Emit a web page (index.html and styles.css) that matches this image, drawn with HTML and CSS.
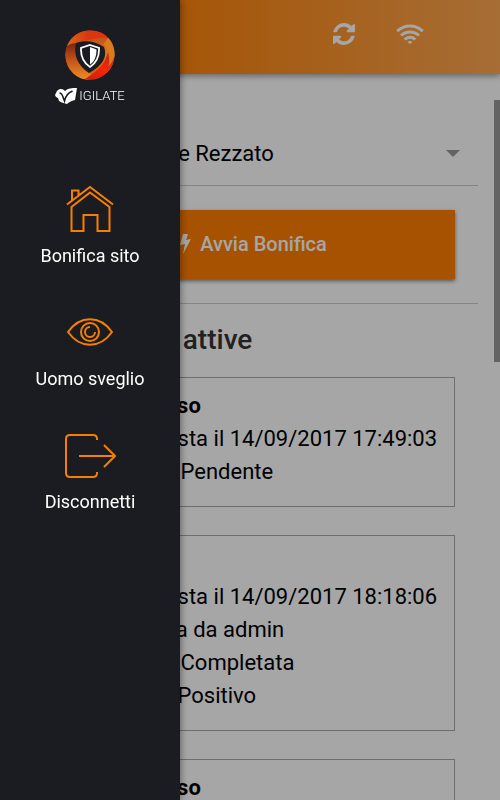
FILE: index.html
```
<!DOCTYPE html>
<html lang="it">
<head>
  <meta charset="UTF-8">
  <meta name="viewport" content="width=device-width, initial-scale=1.0">
  <title>Vigilate</title>
  <link rel="stylesheet" href="styles.css">
</head>
<body>

  <!-- Side menu -->
  <nav class="drawer">
    <div class="logo">
      <svg class="logo-mark" viewBox="0 0 50 50" aria-hidden="true">
        <defs>
          <linearGradient id="top" x1="0" y1="0" x2="1" y2="0">
            <stop offset="0" stop-color="#d8681c"/>
            <stop offset="0.5" stop-color="#d8380f"/>
            <stop offset="1" stop-color="#e8300c"/>
          </linearGradient>
          <linearGradient id="right" x1="0" y1="0" x2="0" y2="1">
            <stop offset="0" stop-color="#b8401a"/>
            <stop offset="0.5" stop-color="#dc7a1e"/>
            <stop offset="1" stop-color="#c8581c"/>
          </linearGradient>
          <linearGradient id="bottom" x1="0" y1="1" x2="1" y2="0">
            <stop offset="0" stop-color="#c81e0a"/>
            <stop offset="0.5" stop-color="#f82408"/>
            <stop offset="1" stop-color="#a83014"/>
          </linearGradient>
          <linearGradient id="left" x1="0" y1="0" x2="0" y2="1">
            <stop offset="0" stop-color="#7a2410"/>
            <stop offset="0.5" stop-color="#c8561a"/>
            <stop offset="1" stop-color="#ee8c22"/>
          </linearGradient>
        </defs>
        <circle cx="25" cy="25" r="24.5" fill="url(#right)"/>
        <path d="M2 16C6 6 15 .5 25 .5c9 0 14 3 18 7-8 0-16 1-22 3-7 1-14 3-19 5.500z" fill="url(#top)"/>
        <path d="M2 16c3-2 6-3 10-3-3 12 2 24 14 31 0 2-1 4-3 5.500C11 49.500.5 38.500.5 25c0-3 .5-6 1.500-9z" fill="url(#left)"/>
        <path d="M20 49c11-7 20-14 23-27 3-2 5 0 6.500 3-.5 13-11 24.500-24.500 24.500-2 0-3.500-.2-5-.5z" fill="url(#bottom)"/>
        <path d="M43 7.500c5 5 7 12 6.500 18-1 4-3 8-6 11 2-8 0-17-5-22z" fill="#dc7a1e"/>
        <path d="M11 13c9-3 19-2 28 4 4 10-2 19-15 26C13 36 8 25 11 13z" fill="#1b1c21"/>
        <path d="M25 15l9 3v2c0 8-3 13-9 17-6-4-9-9-9-17v-2z" fill="#1b1c21" stroke="#fff" stroke-width="1.800"/>
        <path d="M25 17l6.500 2.500c0 7-2 12-6.500 15z" fill="#fff"/>
      </svg>
      <div class="logo-name">
        <svg viewBox="0 0 22 16" aria-hidden="true">
          <path d="M0 7l2-4c3-3 6-2 8 0 3-3 7-3 12-3l-2 12c-4 1-6 2-8 4-2-1-5-1-8-3l-1-3-2-1z" fill="#fff"/>
          <path d="M4.500 5c3 0 3 3 5 8 1-5 3-8 8-10" fill="none" stroke="#1b1c21" stroke-width="1.600"/>
        </svg>
        <span>IGILATE</span>
      </div>
    </div>

    <a class="menu-item" href="#bonifica">
      <svg viewBox="0 0 52 52" aria-hidden="true">
        <path d="M3 20.500L26 3l23 17.500M7.500 23v24h12V31h14v16h12V23L26 8.500zM8 17V6.500h6.500v5"/>
      </svg>
      Bonifica sito
    </a>
    <a class="menu-item" href="#sveglio">
      <svg viewBox="0 0 52 52" aria-hidden="true">
        <path d="M4 25c12-17 32-17 44 0-12 17-32 17-44 0z"/>
        <circle cx="26" cy="25" r="9"/>
        <path d="M26 20a5 5 0 1 0 5 5"/>
      </svg>
      Uomo sveglio
    </a>
    <a class="menu-item" href="#logout">
      <svg viewBox="0 0 52 52" aria-hidden="true">
        <path d="M33 10V9q0-4-4-4H6Q2 5 2 9v34q0 4 4 4h23q4 0 4-4v-1M15 26h36M40 15l11 11-11 11"/>
      </svg>
      Disconnetti
    </a>
  </nav>
  <div class="backdrop"></div>

  <!-- Page -->
  <header class="toolbar">
    <button class="icon-btn" aria-label="Aggiorna">
      <svg viewBox="0 0 1536 1536" aria-hidden="true">
        <path d="M1511 928q0 5-1 7-64 268-268 434.500T764 1536q-146 0-282.500-55T238 1324l-129 129q-19 19-45 19t-45-19-19-45V960q0-26 19-45t45-19h448q26 0 45 19t19 45-19 45l-137 137q71 66 161 102t187 36q134 0 250-65t186-179q11-17 53-117 8-23 30-23h192q13 0 22.500 9.500t9.500 22.500zm25-800v448q0 26-19 45t-45 19h-448q-26 0-45-19t-19-45 19-45l138-138Q969 256 768 256q-134 0-250 65T332 500q-11 17-53 117-8 23-30 23H50q-13 0-22.500-9.500T18 608v-7q65-268 270-434.500T768 0q146 0 284 55.500T1297 212l130-129q19-19 45-19t45 19 19 45z"/>
      </svg>
    </button>
    <button class="icon-btn" aria-label="Rete">
      <svg class="wifi" viewBox="0 0 28 20" aria-hidden="true">
        <path d="M1.200 7.200a18.500 18.500 0 0 1 25.600 0M5 11.500a13 13 0 0 1 18 0M8.700 15.500a7.500 7.500 0 0 1 10.600 0"/>
        <path class="dot" d="M14 20l-2.500-2q2.500-2 5 0z"/>
      </svg>
    </button>
  </header>

  <main class="content">
    <div class="site">
      <select aria-label="Sito">
        <option>Sede centrale Rezzato</option>
      </select>
    </div>

    <div class="action">
      <button class="start-btn">
        <svg viewBox="0 0 12 20" aria-hidden="true">
          <path d="M4 0h5L7 6l5-1L4 20l2-10-5 1z"/>
        </svg>
        Avvia Bonifica
      </button>
    </div>

    <h2>Richieste attive</h2>

    <section class="card">
      <strong>In Corso</strong>
      <p>Richiesta il 14/09/2017 17:49:03</p>
      <p>Stato: Pendente</p>
    </section>

    <section class="card">
      <strong>Finita</strong>
      <p>Richiesta il 14/09/2017 18:18:06</p>
      <p>Gestita da admin</p>
      <p>Stato: Completata</p>
      <p>Esito: Positivo</p>
    </section>

    <section class="card">
      <strong>In Corso</strong>
    </section>
  </main>
  <div class="scroll-thumb"></div>

</body>
</html>
```
FILE: styles.css
```
* {
  margin: 0;
  padding: 0;
  box-sizing: border-box;
}

body {
  font-family: Roboto, sans-serif;
  font-size: 22px;
  line-height: 33px;
  height: 100vh;
  overflow: hidden;
  background-color: #fff;
  color: #000;
}

button, select {
  font-family: inherit;
  border: none;
  cursor: pointer;
}

/* Side menu */
.drawer {
  position: fixed;
  top: 0;
  bottom: 0;
  left: 0;
  z-index: 3;
  width: 180px;
  padding-top: 30px;
  background-color: #1b1c21;
  box-shadow: 0 0 8px rgba(0, 0, 0, 0.5);
}

.backdrop {
  position: fixed;
  inset: 0;
  z-index: 2;
  background-color: rgba(0, 0, 0, 0.35);
}

.logo {
  display: flex;
  flex-direction: column;
  align-items: center;
  height: 154px;
}

.logo-mark {
  width: 50px;
  height: 50px;
}

.logo-name {
  display: flex;
  align-items: center;
  gap: 2px;
  margin-top: 8px;
  color: #fff;
  font-size: 13px;
  font-weight: 300;
  line-height: 16px;
}

.logo-name svg {
  width: 22px;
  height: 16px;
}

.menu-item {
  display: flex;
  flex-direction: column;
  align-items: center;
  gap: 8px;
  margin-bottom: 39px;
  color: #fff;
  font-size: 18px;
  line-height: 24px;
  text-decoration: none;
}

.menu-item svg {
  width: 52px;
  height: 52px;
  fill: none;
  stroke: #f77f00;
  stroke-width: 2;
}

/* Top bar */
.toolbar {
  display: flex;
  justify-content: flex-end;
  align-items: center;
  gap: 26px;
  height: 74px;
  padding: 0 70px 6px 0;
  background: linear-gradient(to right, #ff7e00 24%, #ffa852);
  box-shadow: 0 2px 6px rgba(0, 0, 0, 0.4);
}

.icon-btn {
  display: flex;
  justify-content: center;
  align-items: center;
  width: 40px;
  height: 40px;
  background: none;
}

.icon-btn svg {
  width: 22px;
  height: 22px;
  fill: #fff;
}

.icon-btn .wifi {
  width: 28px;
  height: 20px;
  fill: none;
  stroke: #fff;
  stroke-width: 3;
  overflow: visible;
}

.icon-btn .dot {
  fill: #fff;
  stroke: none;
}

/* Page content */
.content {
  padding: 48px 22px 0;
}

.site {
  position: relative;
  border-bottom: 1px solid #ccc;
}

.site select {
  width: 100%;
  height: 63px;
  padding-left: 35px;
  appearance: none;
  background: none;
  color: #000;
  font-size: 22px;
}

.site::after {
  content: '';
  position: absolute;
  top: 50%;
  right: 18px;
  margin-top: -4px;
  border: 7px solid transparent;
  border-top-color: #999;
  border-bottom: none;
  pointer-events: none;
}

.action {
  padding: 24px 23px;
  border-bottom: 1px solid #ccc;
}

.start-btn {
  display: flex;
  justify-content: center;
  align-items: center;
  gap: 9px;
  width: 100%;
  height: 69px;
  padding: 0 0 2px 6px;
  background-color: #ff7e00;
  box-shadow: 0 2px 4px rgba(0, 0, 0, 0.5);
  color: #fff;
  font-size: 20px;
  font-weight: 500;
}

.start-btn svg {
  width: 12px;
  height: 20px;
  fill: #fff;
}

h2 {
  margin: 19px 0 21px 38px;
  color: #333;
  font-size: 28px;
  font-weight: 500;
  line-height: 33px;
}

.card {
  margin: 0 23px 28px;
  padding: 11px 15px 18px 72px;
  border: 1px solid #aaa;
  white-space: nowrap;
}

.card strong {
  display: block;
}

.scroll-thumb {
  position: fixed;
  top: 100px;
  right: 0;
  width: 6px;
  height: 262px;
  background-color: #999;
}
```
